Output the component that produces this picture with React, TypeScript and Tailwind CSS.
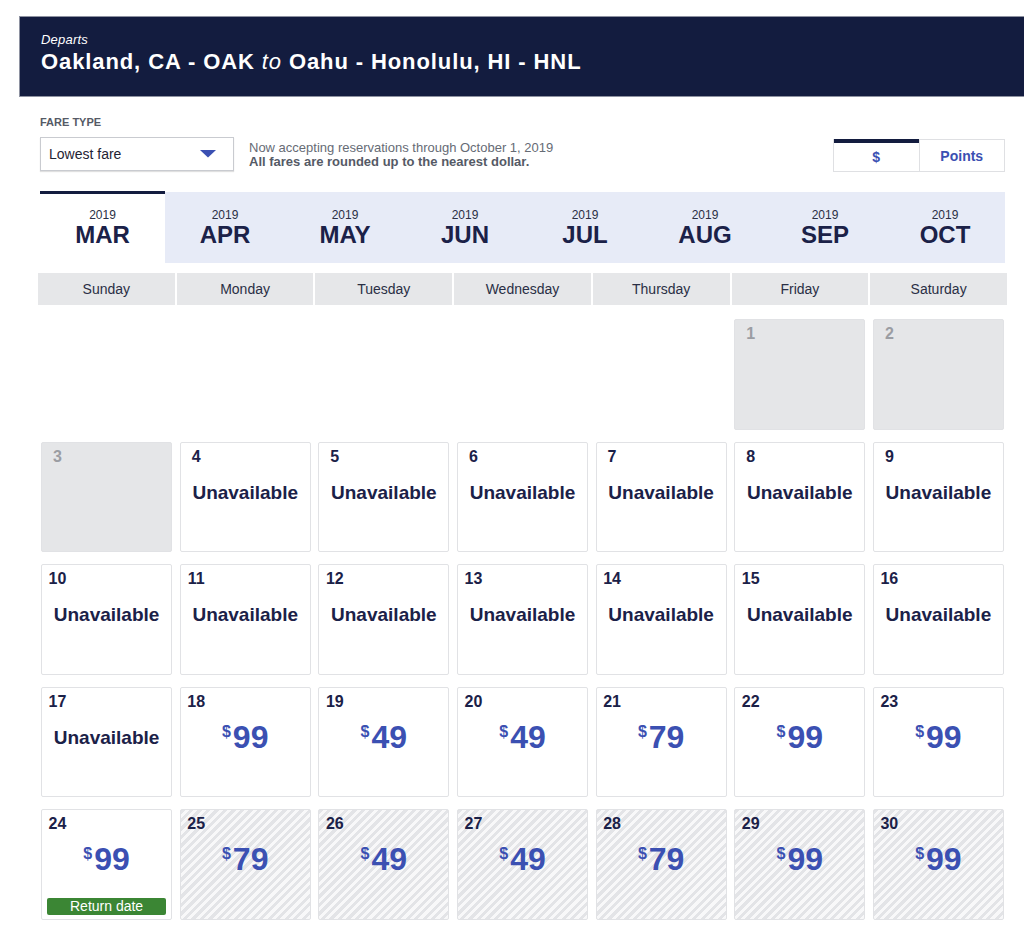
import React from "react";

type Day =
    | { kind: "empty" }
    | { kind: "past"; n: number }
    | { kind: "na"; n: number }
    | { kind: "fare"; n: number; price: number; striped?: boolean; ret?: boolean };

const months = ["APR", "MAY", "JUN", "JUL", "AUG", "SEP", "OCT"];
const weekdays = ["Sunday", "Monday", "Tuesday", "Wednesday", "Thursday", "Friday", "Saturday"];

const prices: Record<number, number> = { 18: 99, 19: 49, 20: 49, 21: 79, 22: 99, 23: 99, 24: 99, 25: 79, 26: 49, 27: 49, 28: 79, 29: 99, 30: 99 };

function buildDays(): Day[] {
    const days: Day[] = [];
    for (let i = 0; i < 5; i++) days.push({ kind: "empty" });
    for (let n = 1; n <= 30; n++) {
        if (n <= 3) days.push({ kind: "past", n });
        else if (n <= 17) days.push({ kind: "na", n });
        else days.push({ kind: "fare", n, price: prices[n], striped: n >= 25, ret: n === 24 });
    }
    return days;
}

function DayNum({ n, muted }: { n: number; muted?: boolean }) {
    return (
        <div className={`pl-[5px] w-[26px] text-center text-[16px] leading-[18px] font-bold ${muted ? "text-[#9b9da3]" : "text-[#1b2148]"}`}>
            {n}
        </div>
    );
}

function Cell({ day }: { day: Day }) {
    if (day.kind === "empty") return <div />;
    if (day.kind === "past") {
        return (
            <div className="h-[110.5px] rounded-[2px] border border-[#e1e2e5] bg-[#e5e6e8] pt-[5px]">
                <DayNum n={day.n} muted />
            </div>
        );
    }
    if (day.kind === "na") {
        return (
            <div className="h-[110.5px] rounded-[2px] border border-[#e1e2e5] bg-white pt-[5px]">
                <DayNum n={day.n} />
                <div className="mt-[16px] text-center text-[19px] leading-[22px] font-bold text-[#1b2148]">Unavailable</div>
            </div>
        );
    }
    return (
        <div
            className={`h-[110.5px] rounded-[2px] border border-[#e1e2e5] pt-[5px] flex flex-col ${day.striped
                ? "bg-[repeating-linear-gradient(135deg,#e3e4e7_0px,#e3e4e7_3px,#f8f8f9_3px,#f8f8f9_6px)]"
                : "bg-white"
                }`}
        >
            <DayNum n={day.n} />
            <div className="mt-[10px] flex items-start justify-center text-[#3b50b2] font-bold">
                <span className="text-[16px] leading-none mt-[3px] mr-[2px]">$</span>
                <span className="text-[32px] leading-none">{day.price}</span>
            </div>
            {day.ret && (
                <div className="mt-auto mb-[4px] mx-[5px] h-[17px] rounded-[2px] bg-[#3b8634] flex items-center justify-center text-[14px] text-white">
                    Return date
                </div>
            )}
        </div>
    );
}

export default function App() {
    const days = buildDays();

    return (
        <div className="min-h-[926px] w-full bg-white overflow-hidden font-['Liberation_Sans',Arial,sans-serif]">
            {/* Route banner */}
            <header className="mt-[16px] ml-[19px] h-[81px] border-y border-l border-[#8e92a1] bg-[#131c3f] pl-[21px] pt-[15px] text-white">
                <div className="text-[13px] leading-[16px] italic tracking-[0.2px]">Departs</div>
                <div className="mt-[1px] text-[22px] leading-[26px] font-bold tracking-[0.9px]">
                    Oakland, CA - OAK <span className="font-normal italic">to</span> Oahu - Honolulu, HI - HNL
                </div>
            </header>

            <div className="ml-[38px] w-[969px]">
                {/* Fare controls */}
                <div className="px-[2px]">
                    <div className="mt-[19px] text-[11px] leading-[13px] font-bold text-[#555a66]">FARE TYPE</div>
                    <div className="mt-[8px] flex items-start">
                        <div className="w-[194px] h-[34px] border border-[#c9cbd0] shadow-[0_1px_1px_rgba(0,0,0,0.12)] bg-white flex items-center justify-between pl-[8px] pr-[17px]">
                            <span className="text-[14px] text-[#1f2333]">Lowest fare</span>
                            <svg width="16" height="8" viewBox="0 0 16 8">
                                <path d="M0 0 L16 0 L8 7.5 Z" fill="#3b50b2" />
                            </svg>
                        </div>
                        <div className="ml-[15px] mt-[4px] text-[13px] leading-[14px] text-[#666b75]">
                            <div>Now accepting reservations through October 1, 2019</div>
                            <div className="font-bold text-[#555a66]">All fares are rounded up to the nearest dollar.</div>
                        </div>
                        <div className="ml-auto mt-[2px] w-[172px] h-[33px] flex border-x border-b border-[#dfe0e3] text-[14px] font-bold text-[#3b50b2]">
                            <div className="flex-1 border-t-[4px] border-[#131c3f] flex items-center justify-center">$</div>
                            <div className="flex-1 border-t border-l border-[#dfe0e3] flex items-center justify-center pt-[1px]">Points</div>
                        </div>
                    </div>
                </div>

                {/* Month tabs */}
                <div className="mt-[19px] mx-[2px] flex h-[72px]">
                    <div className="w-[125px] border-t-[3px] border-[#131c3f] bg-white pt-[14px] text-center text-[#1b2148]">
                        <div className="text-[12px] leading-[14px] text-[#2a2f45]">2019</div>
                        <div className="text-[24px] leading-[26px] font-bold">MAR</div>
                    </div>
                    <div className="flex-1 mt-[1px] bg-[#e7ebf7] flex">
                        {months.map((m) => (
                            <div key={m} className="flex-1 pt-[16px] text-center text-[#1b2148]">
                                <div className="text-[12px] leading-[14px] text-[#2a2f45]">2019</div>
                                <div className="text-[24px] leading-[26px] font-bold">{m}</div>
                            </div>
                        ))}
                    </div>
                </div>

                {/* Weekday header */}
                <div className="mt-[10px] grid grid-cols-7 gap-[2px]">
                    {weekdays.map((d) => (
                        <div key={d} className="h-[32px] bg-[#e6e7e9] flex items-center justify-center text-[14px] text-[#2a2f45]">
                            {d}
                        </div>
                    ))}
                </div>

                {/* Calendar grid */}
                <div className="mt-[14px] px-[3px] grid grid-cols-7 gap-x-[7.5px] gap-y-[12px]">
                    {days.map((d, i) => (
                        <Cell key={i} day={d} />
                    ))}
                </div>
            </div>
        </div>
    );
}
